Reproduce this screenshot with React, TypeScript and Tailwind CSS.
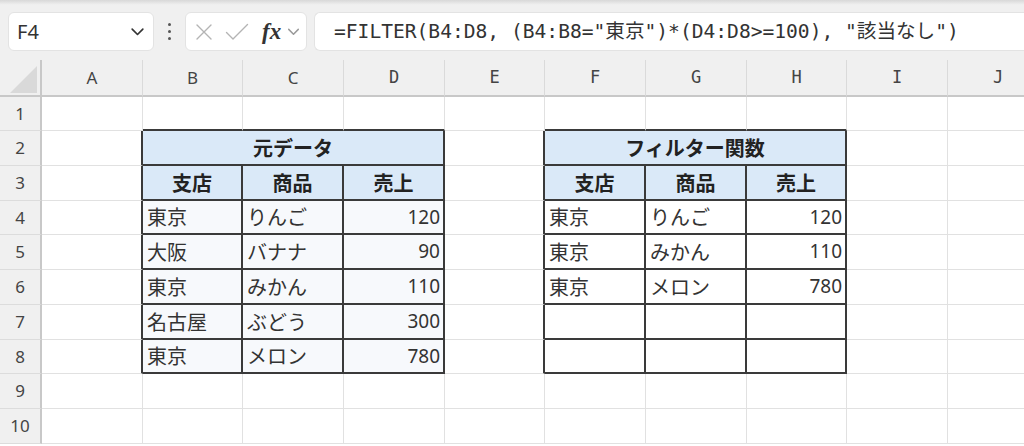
const COLS = ['A', 'B', 'C', 'D', 'E', 'F', 'G', 'H', 'I', 'J'];

const LEFT_DATA = [
  ['東京', 'りんご', '120'],
  ['大阪', 'バナナ', '90'],
  ['東京', 'みかん', '110'],
  ['名古屋', 'ぶどう', '300'],
  ['東京', 'メロン', '780'],
];

const RIGHT_DATA = [
  ['東京', 'りんご', '120'],
  ['東京', 'みかん', '110'],
  ['東京', 'メロン', '780'],
  ['', '', ''],
  ['', '', ''],
];

const HEADS = ['支店', '商品', '売上'];

function ChevronDown({ className }: { className?: string }) {
  return (
    <svg className={className} viewBox="0 0 16 16" fill="none" stroke="currentColor" strokeWidth={1.4} strokeLinecap="round" strokeLinejoin="round">
      <path d="M3.5 6l4.5 4.5L12.5 6" />
    </svg>
  );
}

function Toolbar() {
  return (
    <div className="h-[60px] bg-gradient-to-b from-[#d8d8d8] via-[#f0f0f0] via-[8%] to-[#f0f0f0] pt-[12px] pl-[8px] flex items-start">
      {/* name box */}
      <div className="w-[146px] h-[39px] bg-white rounded-[6px] border border-[#e3e3e3] flex items-center pl-[8px] pr-[6px]">
        <span className="flex-1 text-[20px] text-[#333] font-['Noto_Sans',sans-serif] leading-none">F4</span>
        <ChevronDown className="w-[19px] h-[19px] text-[#333]" />
      </div>
      {/* more */}
      <div className="w-[31px] h-[39px] flex flex-col items-center justify-center gap-[4px]">
        <span className="w-[3px] h-[3px] rounded-full bg-[#555]" />
        <span className="w-[3px] h-[3px] rounded-full bg-[#555]" />
        <span className="w-[3px] h-[3px] rounded-full bg-[#555]" />
      </div>
      {/* fx box */}
      <div className="w-[122px] h-[39px] bg-white rounded-[6px] border border-[#e3e3e3] flex items-center pl-[8px]">
        <svg className="w-[20px] h-[20px] text-[#b4b4b4]" viewBox="0 0 20 20" fill="none" stroke="currentColor" strokeWidth={1.4} strokeLinecap="round">
          <path d="M3 3l14 14M17 3L3 17" />
        </svg>
        <svg className="ml-[11px] w-[24px] h-[20px] text-[#b4b4b4]" viewBox="0 0 24 20" fill="none" stroke="currentColor" strokeWidth={1.4} strokeLinecap="round" strokeLinejoin="round">
          <path d="M1.5 10.5l6.5 6.5L22.5 2.5" />
        </svg>
        <span className="ml-[13px] text-[23px] leading-none italic font-bold text-[#333] font-['Liberation_Serif',serif]">fx</span>
        <ChevronDown className="ml-[4px] w-[17px] h-[17px] text-[#9a9a9a]" />
      </div>
      {/* formula */}
      <div className="ml-[7px] flex-1 h-[39px] bg-white rounded-l-[6px] border border-r-0 border-[#e3e3e3] flex items-center pl-[19px]">
        <span className="text-[19.6px] leading-none text-[#333] whitespace-pre font-['DejaVu_Sans_Mono','Noto_Sans_CJK_JP',monospace]">
          =FILTER(B4:D8, (B4:B8="東京")*(D4:D8&gt;=100), "該当なし")
        </span>
      </div>
    </div>
  );
}

type Cell = { text: string; align: 'left' | 'right' | 'center'; bold: boolean; bg: string; span: number };

function getCell(r: number, c: number): Cell | null {
  const empty: Cell = { text: '', align: 'left', bold: false, bg: 'bg-white', span: 1 };
  const inL = c >= 1 && c <= 3;
  const inR = c >= 5 && c <= 7;
  if (!(inL || inR) || r < 2 || r > 8) return empty;
  const first = inL ? 1 : 5;
  const k = c - first;
  if (r === 2) {
    if (k !== 0) return null;
    return { text: inL ? '元データ' : 'フィルター関数', align: 'center', bold: true, bg: 'bg-[#dae9f8]', span: 3 };
  }
  if (r === 3) return { text: HEADS[k], align: 'center', bold: true, bg: 'bg-[#dae9f8]', span: 1 };
  const data = inL ? LEFT_DATA : RIGHT_DATA;
  return {
    text: data[r - 4][k],
    align: k === 2 ? 'right' : 'left',
    bold: false,
    bg: inL ? 'bg-[#f7f9fc]' : 'bg-white',
    span: 1,
  };
}

function Sheet() {
  const rows = Array.from({ length: 10 }, (_, i) => i + 1);
  return (
    <div className="grid grid-cols-[42px_101px_100px_101px_101px_100px_101px_101px_100px_101px_101px] grid-rows-[37px_34px_35px_35px_34px_35px_35px_35px_34px_35px_35px] bg-white">
      {/* corner */}
      <div className="bg-[#f0f0f0] border-r-2 border-b-2 border-[#c8c8c8] relative">
        <div className="absolute right-[3px] bottom-[2px] w-0 h-0 border-l-[27px] border-l-transparent border-b-[27px] border-b-[#d9d9d9]" />
      </div>
      {COLS.map((col, i) => (
        <div
          key={col}
          className={`bg-[#f0f0f0] border-r border-r-[#dadada] border-b-2 border-b-[#c8c8c8] flex items-center justify-center text-[17px] text-[#444] ${
            i < 3 ? "font-['Noto_Sans',sans-serif]" : "font-['DejaVu_Sans_Mono',monospace] text-[16px]"
          }`}
        >
          {col}
        </div>
      ))}
      {rows.map((r) => (
        <Row key={r} r={r} />
      ))}
    </div>
  );
}

function Row({ r }: { r: number }) {
  return (
    <>
      <div className="bg-[#f0f0f0] border-r-2 border-r-[#c8c8c8] border-b border-b-[#dcdcdc] flex items-center justify-center text-[17px] text-[#444] font-['Noto_Sans',sans-serif]">
        {r}
      </div>
      {COLS.map((_, c) => {
        const cell = getCell(r, c);
        if (!cell) return null;
        const lastCol = c + cell.span - 1;
        const inL = c >= 1 && c <= 3;
        const inR = c >= 5 && c <= 7;
        const inRows = r >= 2 && r <= 8;
        const rightBlack = inRows && (inL || inR || lastCol === 0 || lastCol === 4);
        const bottomBlack = (inL || inR) && (inRows || r === 1);
        const rb = rightBlack ? 'border-r-2 border-r-[#3a3a3a]' : 'border-r border-r-[#e1e1e1]';
        const bb = bottomBlack ? 'border-b-2 border-b-[#3a3a3a]' : 'border-b border-b-[#e1e1e1]';
        const span = cell.span === 3 ? 'col-span-3' : '';
        const just = cell.align === 'right' ? 'justify-end pr-[3px]' : cell.align === 'center' ? 'justify-center' : 'justify-start pl-[4px]';
        const font =
          cell.align === 'right'
            ? "font-['Noto_Sans',sans-serif] text-[19px] text-[#333]"
            : cell.bold
              ? "font-['Noto_Sans_CJK_JP',sans-serif] text-[20px] font-bold text-[#222]"
              : "font-['Noto_Sans_CJK_JP',sans-serif] text-[20px] text-[#333]";
        return (
          <div key={c} className={`${span} ${cell.bg} ${rb} ${bb} flex items-center ${just} ${font} leading-none whitespace-nowrap overflow-hidden`}>
            {cell.text}
          </div>
        );
      })}
    </>
  );
}

export default function App() {
  return (
    <div className="w-[1024px] h-[446px] overflow-hidden bg-white flex flex-col">
      <Toolbar />
      <Sheet />
    </div>
  );
}
